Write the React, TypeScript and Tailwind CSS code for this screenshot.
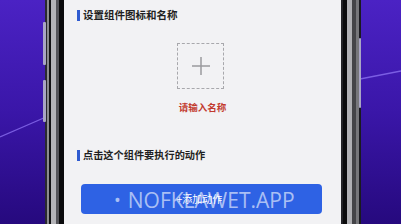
import React from "react";

const cjk = '"Noto Sans CJK SC", "Noto Sans", sans-serif';

export default function App() {
  return (
    <div className="relative w-[401px] h-[224px] overflow-hidden bg-gradient-to-b from-[#4b22c4] via-[#3a16a8] to-[#26097e]">
      <svg className="absolute inset-0" width="401" height="224" viewBox="0 0 401 224">
        <line x1="0" y1="137" x2="46" y2="117" stroke="#8a6ff0" strokeWidth="1.3" opacity="0.8" />
        <line x1="360" y1="79" x2="401" y2="71" stroke="#8a6ff0" strokeWidth="1.3" opacity="0.8" />
      </svg>
      <div className="relative flex h-full ml-[45px]">
        <div className="w-[2px] h-full bg-[#2a2a30]" />
        <div className="w-[2px] h-full bg-[#8c8c90]" />
        <div className="w-[2px] h-full bg-[#111113]" />
        <div className="w-[5px] h-full bg-[#b4b4b8]" />
        <div className="w-[3px] h-full bg-[#55555a]" />
        <div className="w-[5px] h-full bg-[#0b0b0c]" />
        <div className="w-[277px] h-full bg-[#f2f2f4] flex flex-col" style={{ fontFamily: cjk }}>
          <div className="flex items-center mt-[8px] ml-[13px] h-[14px]">
            <div className="w-[3px] h-[11px] bg-[#2f5bd0]" />
            <span className="ml-[3px] text-[10.5px] font-bold leading-[14px] text-[#1f1f22]">设置组件图标和名称</span>
          </div>
          <div className="mt-[21px] ml-[113px] w-[47px] h-[46px] border border-dashed border-[#a8a8ac] flex items-center justify-center">
            <svg width="20" height="20" viewBox="0 0 20 20">
              <line x1="1" y1="10" x2="19" y2="10" stroke="#9a9a9e" strokeWidth="1.5" />
              <line x1="10" y1="1" x2="10" y2="19" stroke="#9a9a9e" strokeWidth="1.5" />
            </svg>
          </div>
          <div className="mt-[12px] text-center text-[9.5px] leading-[12px] font-bold text-[#c23a2e]">请输入名称</div>
          <div className="flex items-center mt-[35px] ml-[13px] h-[14px]">
            <div className="w-[3px] h-[11px] bg-[#2f5bd0]" />
            <span className="ml-[3px] text-[10.2px] font-bold leading-[14px] text-[#1f1f22]">点击这个组件要执行的动作</span>
          </div>
          <div className="mt-[22px] ml-[17px] w-[241px] h-[30px] rounded-[4px] bg-[#2e62e4] flex items-center justify-center">
            <span className="text-[10px] leading-[12px] text-white mr-[4px]">+添加动作</span>
          </div>
        </div>
        <div className="w-[2px] h-full bg-[#222226]" />
        <div className="w-[4px] h-full bg-[#0b0b0c]" />
        <div className="w-[5px] h-full bg-[#b0b0b4]" />
        <div className="w-[4px] h-full bg-[#444448]" />
        <div className="w-[3px] h-full bg-[#77777b]" />
        <div className="w-[2px] h-full bg-[#1a1a20]" />
      </div>
      <div className="absolute left-[43px] top-[22px] w-[3px] h-[43px] rounded-[1px] bg-[#a9a6c4]" />
      <div className="absolute left-[43px] top-[80px] w-[3px] h-[42px] rounded-[1px] bg-[#a9a6c4]" />
      <div className="absolute left-[359px] top-[38px] w-[2px] h-[70px] rounded-[1px] bg-[#a9a6c4]" />
      <div
        className="absolute left-[114px] top-[186px] flex items-center text-[21px] leading-[28px] font-normal text-[#ffffff]/60"
        style={{ fontFamily: '"Open Sans", Roboto, sans-serif' }}
      >
        <span className="text-[18px] mr-[7px]">•</span>
        <span>NOFKLAWET.APP</span>
      </div>
    </div>
  );
}
